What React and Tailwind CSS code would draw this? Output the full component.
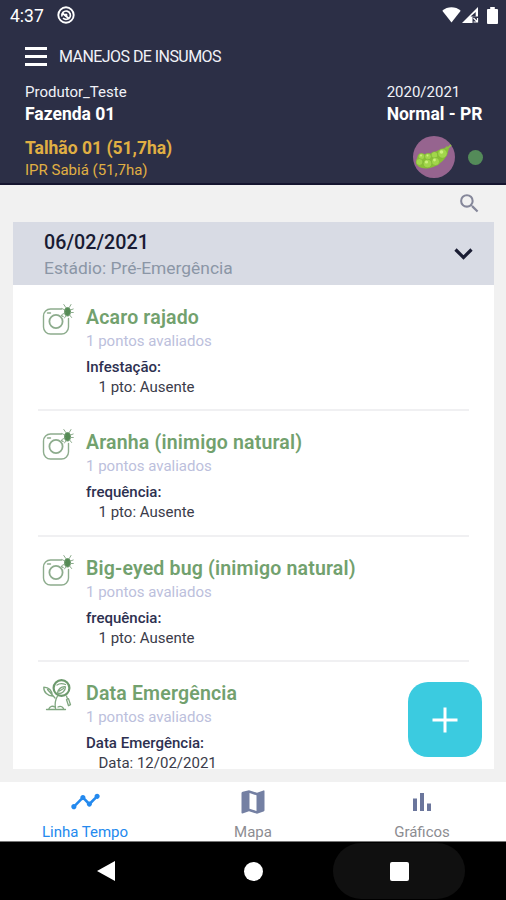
import React from "react";
import { MdSearch, MdTimeline } from "react-icons/md";

/* ── DATA ───────────────────────── */

const records = [
  { icon: PestIcon, title: "Acaro rajado", label: "Infestação:", value: "1 pto: Ausente" },
  { icon: PestIcon, title: "Aranha (inimigo natural)", label: "frequência:", value: "1 pto: Ausente" },
  { icon: PestIcon, title: "Big-eyed bug (inimigo natural)", label: "frequência:", value: "1 pto: Ausente" },
  { icon: PlantIcon, title: "Data Emergência", label: "Data Emergência:", value: "Data: 12/02/2021" },
];

/* ── ICONS ───────────────────────── */

function PestIcon() {
  return (
    <svg width="34" height="34" viewBox="0 0 34 34" fill="none" stroke="#8dac8d" strokeWidth="1.4" strokeLinecap="round">
      <path d="M20.5 6H9.500a7 7 0 0 0-7 7v11a7 7 0 0 0 7 7h11a7 7 0 0 0 7-7V15.500" />
      <circle cx="15" cy="18.500" r="6.600" strokeWidth="1.800" />
      <path d="M6.500 10h3M20.500 12.500l1.500 1" />
      <ellipse cx="26.500" cy="8.800" rx="3" ry="4.200" fill="#558b55" stroke="#6b9a6b" strokeWidth="1" />
      <path d="M24.800 4.500l-2-3M28.300 4.500l1.700-3M24 7l-3.200-1.500M29.500 7l2.700-1M24 10l-3 1.500M29.500 9.500h2.800M25 12.500l-1.500 2.500M28.600 12l2 2.500" strokeWidth="1" />
    </svg>
  );
}

function PlantIcon() {
  return (
    <svg width="34" height="34" viewBox="0 0 34 34" fill="none" stroke="#7fa67f" strokeWidth="1.300" strokeLinecap="round" strokeLinejoin="round">
      <circle cx="20.500" cy="9" r="7.900" stroke="#6d9a6d" strokeWidth="2.200" />
      <path d="M25.500 17l1 3M25.500 20.500l2-.8 2 6-2 1z" />
      <path d="M11.500 17C7 17 2.500 13.500 2.800 8.200c4.700.2 8.200 3.300 8.700 8.800zM6.500 10.500l7.500 8.500" />
      <path d="M14.500 29.500c-1-5 0-9 2-12.500M16.500 14c1-4.500 4-6.500 8-6.200-.2 4-3 7-7.500 6.700M16 6c2-1.500 5.500-1.800 8.500-.5M18.500 12l4-2.500" />
      <path d="M5.500 30.500h19M8 29.500c1-2 3.500-3 6-1.500M17 28c2-1 4.500-.5 5.500 1.500" />
    </svg>
  );
}

function PodIcon() {
  return (
    <svg width="42" height="42" viewBox="0 0 42 42">
      <circle cx="21" cy="21" r="21" fill="#96648f" />
      <path d="M3 26c1 8 14 8 21 3 6-3 10-8 12-17l-2-2c-3 4-9 3-13 7-4 1-9 1-16 2z" fill="#8abf35" />
      <g fill="#a2d64b" stroke="#76ad32" strokeWidth="0.500">
        <circle cx="8.500" cy="20.500" r="3.200" />
        <circle cx="15" cy="20.500" r="3.300" />
        <circle cx="21.500" cy="19" r="3.300" />
        <circle cx="29.500" cy="17.500" r="4.700" />
        <circle cx="6.500" cy="26" r="3.400" />
        <circle cx="14.500" cy="27.500" r="4.300" />
        <circle cx="22.500" cy="25.500" r="4" />
      </g>
      <g fill="#cdf07e">
        <circle cx="28.500" cy="16" r="1.800" />
        <circle cx="13.500" cy="26" r="1.600" />
        <circle cx="21.500" cy="24" r="1.400" />
        <circle cx="8" cy="19.500" r="1" />
        <circle cx="14.500" cy="19.500" r="1" />
      </g>
      <path d="M33 12.500c2-.5 3.500-1.500 4.500-3" fill="none" stroke="#8dbf45" strokeWidth="1.800" strokeLinecap="round" />
    </svg>
  );
}

function MapIcon() {
  return (
    <svg width="24" height="24" viewBox="0 0 24 24">
      <path d="M.5 3.200Q.5 2 1.700 1.700L8 .3l8 2.500L22.500.4q1-.2 1 .8v19q0 1-1 1.300L16 23.700l-8-2.500-6.500 2.300q-1 .2-1-.8z" fill="#7480a3" />
      <path d="M8.500 3l7 2.300V21l-7-2.300z" fill="#fff" />
    </svg>
  );
}

function ChartIcon() {
  return (
    <svg width="20" height="18" viewBox="0 0 20 18" fill="#6b769c">
      <path d="M1 5.500h4V18H1zM8 0h4v18H8zM15 10.500h4V18h-4z" />
    </svg>
  );
}

/* ── SECTIONS ───────────────────── */

function StatusBar() {
  return (
    <div className="flex h-8 items-center pl-[10px] pr-2 text-white">
      <span className="text-[17.500px] leading-8">4:37</span>
      <svg className="-mt-0.5 ml-[13px]" width="18" height="18" viewBox="0 0 18 18" fill="none" stroke="#fff">
        <circle cx="9" cy="9" r="7.700" strokeWidth="1.900" />
        <path d="M5 10.500a4.300 4.300 0 1 1 7.500 1.500M5.800 7.500l6.700 5.500M6 12.200c1.500 1.300 3.500 1.500 5 .6" strokeWidth="1.700" />
        <circle cx="9" cy="9" r="1.500" fill="#fff" stroke="none" />
      </svg>
      <div className="-mt-0.5 ml-auto flex items-center">
        <svg width="19" height="16" viewBox="0 0 19 16" fill="#fff">
          <path d="M9.500 15.500L.3 3.800C5.500-.8 13.500-.8 18.700 3.800z" />
        </svg>
        <svg className="ml-px" width="17" height="16" viewBox="0 0 17 16">
          <path d="M16 0v16H0z" fill="#fff" />
          <path d="M13.700 5v4.500H8.500z" fill="#2c2f46" />
          <path d="M10.500 9.500h6.500V16h-6.500z" fill="#2c2f46" />
          <path d="M11.500 11l4 4M15.500 11v4h-4" fill="none" stroke="#fff" strokeWidth="1.200" />
        </svg>
        <svg className="ml-[8px]" width="11" height="17" viewBox="0 0 12 17" fill="#fff" preserveAspectRatio="none">
          <path d="M3.500 0h5v2H11q1 0 1 1v13q0 1-1 1H1q-1 0-1-1V3q0-1 1-1h2.500z" />
        </svg>
      </div>
    </div>
  );
}

function Header() {
  return (
    <header className="h-[185px] shrink-0 border-b-2 border-[#15152f] bg-[#2c2f46] text-[#f1f2f8]">
      <StatusBar />
      <div className="flex h-[49px] items-center pl-[25px]">
        <div className="flex flex-col gap-[5px]">
          <span className="h-[3px] w-[22px] bg-white" />
          <span className="h-[3px] w-[22px] bg-white" />
          <span className="h-[3px] w-[22px] bg-white" />
        </div>
        <h1 className="ml-3 text-base tracking-[-0.56px]">MANEJOS DE INSUMOS</h1>
      </div>
      <div className="flex justify-between pl-[25px] pr-[23.500px]">
        <div>
          <p className="text-[15px] leading-[22px]">Produtor_Teste</p>
          <p className="text-[17.5px] font-bold leading-[23px] text-white">Fazenda 01</p>
        </div>
        <div>
          <p className="text-[15px] leading-[22px]">2020/2021</p>
          <p className="text-[17.5px] font-bold leading-[23px] text-white">Normal - PR</p>
        </div>
      </div>
      <div className="mt-[11px] flex justify-between pl-[25px] pr-[23px] text-[#e0af43]">
        <div>
          <p className="text-[17.5px] font-bold leading-[23px]">Talhão 01 (51,7ha)</p>
          <p className="text-[15px] leading-[21px]">IPR Sabiá (51,7ha)</p>
        </div>
        <div className="-mt-px flex h-[42px] items-center gap-[13px]">
          <PodIcon />
          <span className="size-[15px] rounded-full bg-[#548b59]" />
        </div>
      </div>
    </header>
  );
}

function Record({ icon: Icon, title, label, value }) {
  return (
    <div className="mx-[25px] flex h-[125.300px] shrink-0 border-b-2 border-[#f0f0f2] pt-[17px]">
      <div className="w-12 pl-[3px]">
        <Icon />
      </div>
      <div>
        <h3 className="pt-[3px] text-[19.500px] font-semibold leading-6 tracking-[0.18px] text-[#72a16e]">{title}</h3>
        <p className="-mt-px text-[15px] leading-6 text-[#bcc0dc]">1 pontos avaliados</p>
        <p className="mt-1 text-[15px] font-medium leading-5 text-[#2d3050]">{label}</p>
        <p className="pl-[12.500px] text-[15px] leading-5 text-[#3b3c4a]">{value}</p>
      </div>
    </div>
  );
}

function BottomTabs() {
  return (
    <nav className="flex h-[60px] shrink-0 border-b border-[#777] bg-white pl-px text-[15px] leading-5">
      <div className="flex flex-1 flex-col items-center pt-1 text-[#2389ee]">
        <MdTimeline size={31} className="shrink-0" />
        <span className="mt-[5px] h-4">Linha Tempo</span>
      </div>
      <div className="flex flex-1 flex-col items-center pt-2 text-[#8c8c91]">
        <MapIcon />
        <span className="mt-2 h-4">Mapa</span>
      </div>
      <div className="flex flex-1 flex-col items-center pl-px pt-[11px] text-[#8c8c91]">
        <ChartIcon />
        <span className="mt-[11px] h-4">Gráficos</span>
      </div>
    </nav>
  );
}

function SystemBar() {
  return (
    <div className="flex h-[58px] shrink-0 items-center bg-black">
      <svg className="ml-[96px]" width="20" height="22" viewBox="0 0 20 22" fill="#fff">
        <path d="M19 1v20L1 11z" />
      </svg>
      <span className="ml-[128px] size-[19px] rounded-full bg-white" />
      <div className="ml-[70px] flex h-[56px] w-[132px] items-center justify-center rounded-full bg-[#101010]">
        <span className="size-[19px] rounded-xs bg-white" />
      </div>
    </div>
  );
}

/* ── COMPONENT ───────────────────── */

export default function App() {
  return (
    <main className="relative flex h-[900px] w-[506px] flex-col overflow-hidden bg-[#f1f1f1] font-['Roboto',sans-serif]">
      <Header />

      <div className="flex h-[37px] shrink-0 items-center justify-end pr-6">
        <MdSearch size={25} color="#85879a" />
      </div>

      <section className="ml-[13px] mr-3 flex h-[547px] shrink-0 flex-col overflow-hidden bg-white">
        <div className="mb-px flex h-[63px] shrink-0 items-center justify-between bg-[#d8dbe4] pl-[31px] pr-[21px]">
          <div className="pt-[5px]">
            <h2 className="text-[19.700px] font-medium leading-6 text-[#191b33]">06/02/2021</h2>
            <p className="text-[17.400px] leading-[26px] text-[#8b96a6]">Estádio: Pré-Emergência</p>
          </div>
          <svg width="19" height="12" viewBox="0 0 19 12" fill="none" stroke="#1a1d33" strokeWidth="3.200">
            <path d="M1.500 1.500l8 8 8-8" />
          </svg>
        </div>
        {records.map((r) => (
          <Record key={r.title} {...r} />
        ))}
      </section>

      <div className="h-[13px] shrink-0" />
      <BottomTabs />
      <SystemBar />

      <button className="absolute left-[408px] top-[682px] flex h-[75px] w-[74px] items-center justify-center rounded-[20px] bg-[#3bcbe0]">
        <svg width="26" height="26" viewBox="0 0 26 26" stroke="#fff" strokeWidth="3">
          <path d="M13 .5v25M.5 13h25" />
        </svg>
      </button>
    </main>
  );
}
